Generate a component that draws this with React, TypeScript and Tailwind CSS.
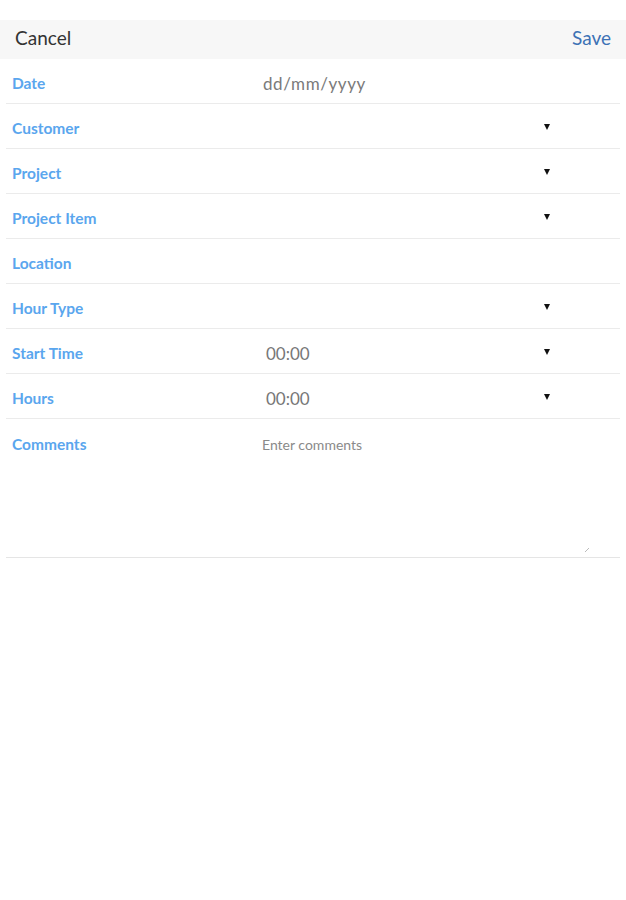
import React from "react";

type Row = { label: string; value?: string; time?: boolean; arrow?: boolean };

const rows: Row[] = [
  { label: "Date", value: "dd/mm/yyyy" },
  { label: "Customer", arrow: true },
  { label: "Project", arrow: true },
  { label: "Project Item", arrow: true },
  { label: "Location" },
  { label: "Hour Type", arrow: true },
  { label: "Start Time", value: "00:00", time: true, arrow: true },
  { label: "Hours", value: "00:00", time: true, arrow: true },
];

function Arrow() {
  return (
    <svg width="6" height="6" viewBox="0 0 6 6" className="block">
      <polygon points="0,0 6,0 3,6" fill="#111" />
    </svg>
  );
}

export default function App() {
  return (
    <div className="min-h-[900px] bg-white pt-[20px]" style={{ fontFamily: "Lato, 'Open Sans', sans-serif" }}>
      <div className="flex h-[39px] items-center justify-between bg-[#f7f7f7] px-[15px] pb-[3px]">
        <span className="text-[19px] text-[#333]">Cancel</span>
        <span className="text-[19px] text-[#3d72b5]">Save</span>
      </div>
      <div className="mx-[6px] flex w-[614px] flex-col">
        {rows.map((r) => (
          <div key={r.label} className="flex h-[45px] items-center border-b border-[#ebebeb] pl-[6px] pt-[5px]">
            <span className="w-[251px] shrink-0 text-[15.5px] font-bold text-[#5aa6ee]">{r.label}</span>
            <span
              className={
                r.time
                  ? "flex-1 pl-[3px] text-[17px] text-[#777]"
                  : "flex-1 text-[17px] tracking-[0.6px] text-[#7a7a7a]"
              }
            >
              {r.value}
            </span>
            {r.arrow && (
              <span className="mb-[4px] mr-[70px] shrink-0">
                <Arrow />
              </span>
            )}
          </div>
        ))}
        <div className="flex h-[139px] flex-col border-b border-[#e5e5e5] pl-[6px] pt-[14px]">
          <div className="flex">
            <span className="w-[250px] shrink-0 text-[15.5px] font-bold text-[#5aa6ee]">Comments</span>
            <span className="pt-[1px] text-[14px] text-[#8a8a8a]">Enter comments</span>
          </div>
          <div className="mt-auto mb-[4px] flex justify-end pr-[30px]">
            <svg width="6" height="6" viewBox="0 0 6 6" className="block">
              <line x1="1" y1="5" x2="5" y2="1" stroke="#bbb" strokeWidth="1" />
            </svg>
          </div>
        </div>
      </div>
    </div>
  );
}
